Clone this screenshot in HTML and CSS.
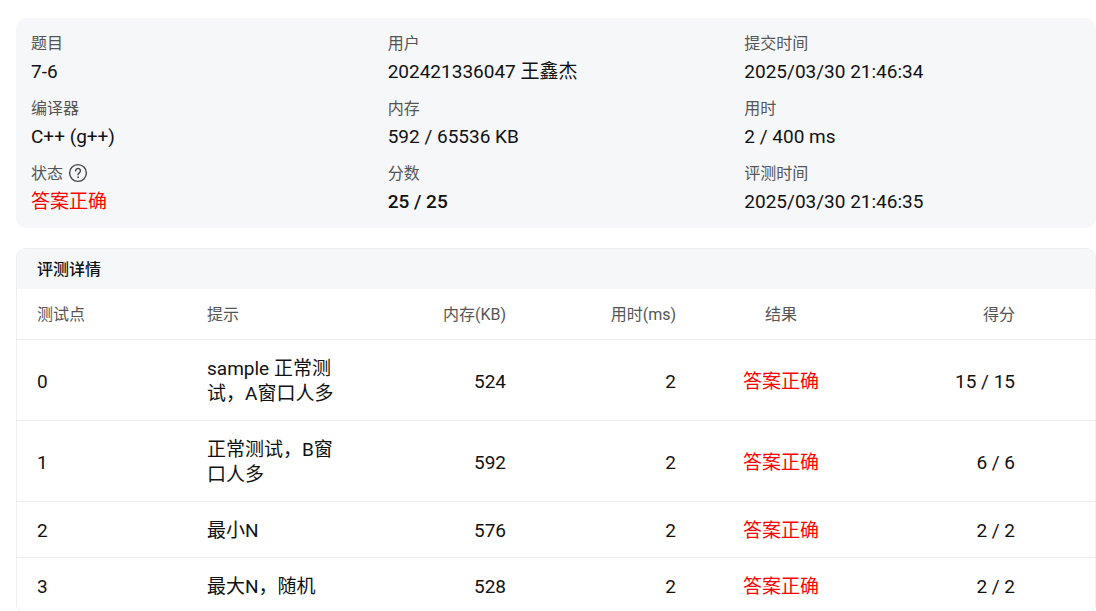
FILE: index.html
```html
<!DOCTYPE html>
<html lang="zh-CN">
<head>
<meta charset="utf-8">
<title>评测详情</title>
<link rel="stylesheet" href="styles.css">
</head>
<body>
<main class="page">
<dl class="summary">
<div class="field"><dt>题目</dt><dd>7-6</dd></div>
<div class="field"><dt>用户</dt><dd>202421336047 王鑫杰</dd></div>
<div class="field"><dt>提交时间</dt><dd>2025/03/30 21:46:34</dd></div>
<div class="field"><dt>编译器</dt><dd>C++ (g++)</dd></div>
<div class="field"><dt>内存</dt><dd>592 / 65536 KB</dd></div>
<div class="field"><dt>用时</dt><dd>2 / 400 ms</dd></div>
<div class="field"><dt>状态 <button class="help" type="button" aria-label="状态说明"><svg viewBox="0 0 20 20" width="20" height="20" fill="none" stroke="currentColor" stroke-width="1.4" stroke-linecap="round"><circle cx="10" cy="10" r="8.4"/><path d="M7.6 7.9a2.4 2.4 0 1 1 3.8 1.9c-.8.6-1.4 1-1.4 1.9"/><circle cx="10" cy="14.2" r=".4" fill="currentColor" stroke-width="1"/></svg></button></dt><dd class="accepted">答案正确</dd></div>
<div class="field"><dt>分数</dt><dd class="score">25 / 25</dd></div>
<div class="field"><dt>评测时间</dt><dd>2025/03/30 21:46:35</dd></div>
</dl>
<section class="details">
<h2>评测详情</h2>
<table>
<colgroup><col class="c-id"><col class="c-hint"><col class="c-mem"><col class="c-time"><col class="c-result"><col class="c-score"></colgroup>
<thead><tr><th>测试点</th><th>提示</th><th class="num">内存(KB)</th><th class="num">用时(ms)</th><th class="mid">结果</th><th class="num">得分</th></tr></thead>
<tbody>
<tr><td>0</td><td>sample 正常测试，A窗口人多</td><td class="num">524</td><td class="num">2</td><td class="mid accepted">答案正确</td><td class="num">15 / 15</td></tr>
<tr><td>1</td><td>正常测试，B窗口人多</td><td class="num">592</td><td class="num">2</td><td class="mid accepted">答案正确</td><td class="num">6 / 6</td></tr>
<tr><td>2</td><td>最小N</td><td class="num">576</td><td class="num">2</td><td class="mid accepted">答案正确</td><td class="num">2 / 2</td></tr>
<tr><td>3</td><td>最大N，随机</td><td class="num">528</td><td class="num">2</td><td class="mid accepted">答案正确</td><td class="num">2 / 2</td></tr>
</tbody>
</table>
</section>
</main>
</body>
</html>
```
FILE: styles.css
```css
* { box-sizing: border-box; }
html { scrollbar-width: none; }
body {
  margin: 0;
  background: #fff;
  color: #111;
  font: 19px/25px Roboto, "Noto Sans CJK SC", sans-serif;
}
.page { padding: 18px 0 0 16px; }
.summary {
  display: grid;
  grid-template-columns: repeat(3, 1fr);
  gap: 14px 20px;
  margin: 0 0 20px;
  padding: 15px 15px 14px;
  border-radius: 10px;
  background: #f6f7f9;
}
.field dt {
  display: flex;
  align-items: center;
  gap: 5px;
  height: 22px;
  margin-bottom: 4px;
  color: #555;
  font-size: 16px;
  line-height: 22px;
}
.field dd { margin: 0; }
.field .score { font-weight: 500; }
.accepted { color: #ff0000; }
.help {
  display: flex;
  align-self: flex-start;
  padding: 0;
  border: 0;
  background: none;
  color: #444;
}
.details {
  border: 1px solid #edeeef;
  border-radius: 10px;
  overflow: hidden;
}
.details h2 {
  margin: 0;
  padding: 2px 20px 0;
  background: #f6f7f9;
  font-size: 16px;
  font-weight: 500;
  line-height: 38px;
}
table {
  width: 100%;
  border-collapse: collapse;
  table-layout: fixed;
}
.c-id { width: 170px; }
.c-hint { width: 170px; }
.c-mem { width: 169px; }
.c-time { width: 170px; }
.c-result { width: 170px; }
th, td {
  padding: 16px 20px 14px;
  border-bottom: 1px solid #edeeef;
  text-align: left;
}
tr:last-child td { border-bottom: 0; }
thead th {
  color: #555;
  font-size: 16px;
  font-weight: 400;
  line-height: 20px;
}
th.num, td.num { text-align: right; }
th.mid, td.mid { text-align: center; }
th:last-child, td:last-child { padding-right: 80px; }
```
